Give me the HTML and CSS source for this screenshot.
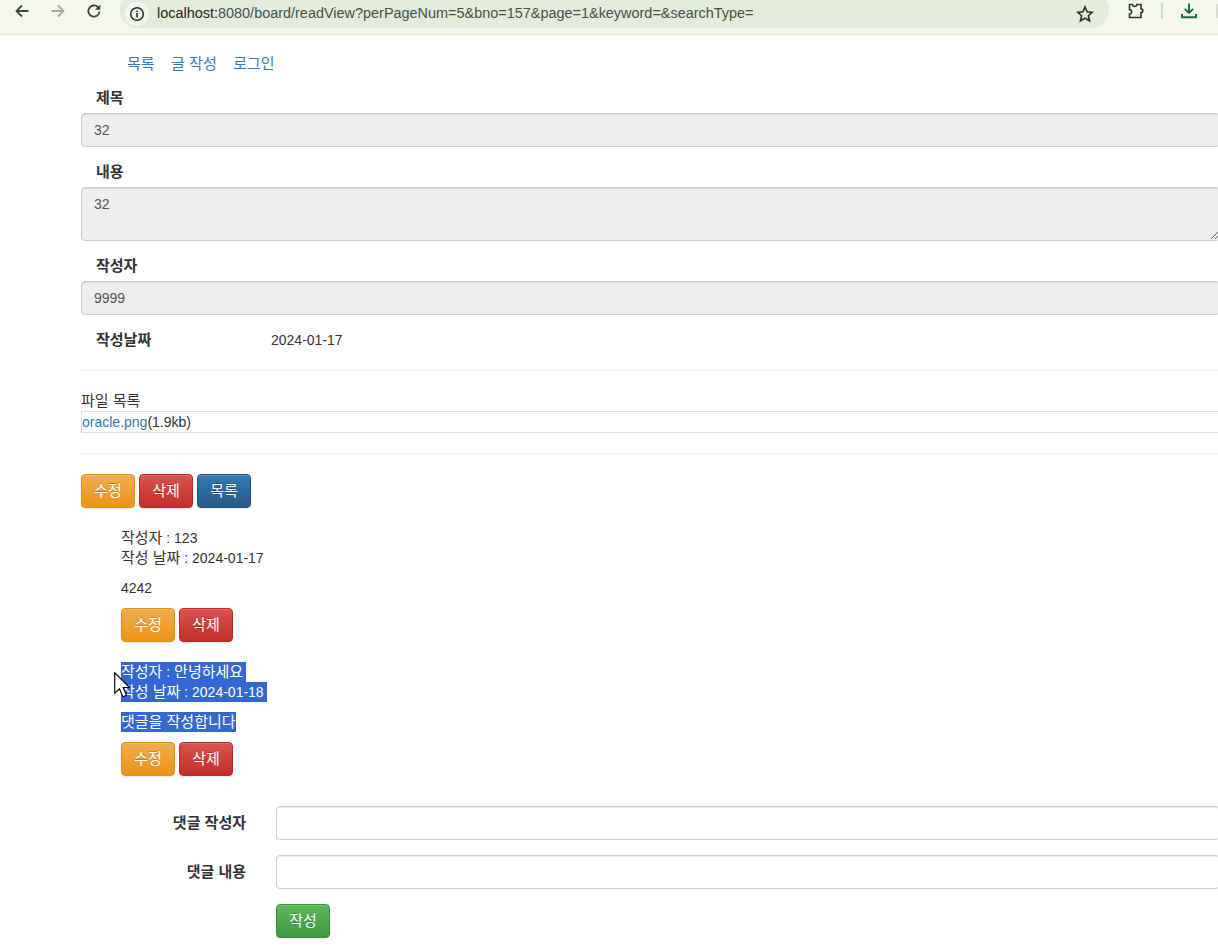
FILE: index.html
```html
<!DOCTYPE html>
<html lang="ko">
<head>
<meta charset="utf-8">
<title>게시글 보기</title>
<link rel="stylesheet" href="styles.css">
</head>
<body>
<header class="toolbar">
  <svg class="tool" viewBox="0 0 16 16"><path d="M14.500 8H2.500M8 2.500L2.500 8 8 13.500" fill="none" stroke="#3f4a3c" stroke-width="1.800"/></svg>
  <svg class="tool" viewBox="0 0 16 16"><path d="M1.500 8h12M8 2.500L13.500 8 8 13.500" fill="none" stroke="#a4aaa0" stroke-width="1.800"/></svg>
  <svg class="tool" viewBox="0 0 16 16"><path d="M13.500 8.500a5.600 5.600 0 1 1-1.700-4.500L13.500 5.800" fill="none" stroke="#3f4a3c" stroke-width="1.800"/><path d="M14.300 1.500v5.300H9z" fill="#3f4a3c"/></svg>
  <div class="omnibox">
    <span class="info"><svg viewBox="0 0 16 16" width="16" height="16"><circle cx="8" cy="8" r="6.300" fill="none" stroke="#262b24" stroke-width="1.500"/><path d="M8 7v4.400M8 4.400v1.600" stroke="#262b24" stroke-width="1.600"/></svg></span>
    <span class="url">localhost:<span class="url-dim">8080/board/readView?perPageNum=5&amp;bno=157&amp;page=1&amp;keyword=&amp;searchType=</span></span>
    <svg class="star" viewBox="0 0 16 16"><path d="M8 1.800l1.900 4.200 4.500.5-3.400 3 1 4.500L8 11.700 4 14l1-4.500-3.400-3 4.500-.5z" fill="none" stroke="#2f362c" stroke-width="1.500"/></svg>
  </div>
  <svg class="ext" viewBox="0 0 18 18"><path d="M2.500 2.500h3.200a2 2 0 0 0 4 0h4.300v4.400a1.800 1.800 0 0 1 0 3.600v5H2.500v-3.500a2.200 2.200 0 0 0 0-4.400z" fill="none" stroke="#333a30" stroke-width="1.600"/></svg>
  <span class="divider"></span>
  <svg class="dl" viewBox="0 0 18 18"><path d="M9 1.500v9M4.800 6.800L9 11l4.200-4.200M2 12v3.200h14V12" fill="none" stroke="#1c6b3a" stroke-width="1.900"/></svg>
  <span class="edge"></span>
</header>

<main class="page">
  <nav class="nav ko">
    <a href="#">목록</a>
    <a href="#">글 작성</a>
    <a href="#">로그인</a>
  </nav>

  <section class="post">
    <label class="label ko">제목</label>
    <input class="field" type="text" value="32" readonly>
    <label class="label ko">내용</label>
    <textarea class="field area" readonly>32</textarea>
    <label class="label ko">작성자</label>
    <input class="field" type="text" value="9999" readonly>
    <div class="date-row">
      <span class="date-label ko">작성날짜</span>
      <span>2024-01-17</span>
    </div>
  </section>

  <hr class="rule rule-top">
  <div class="files">
    <div class="files-title ko">파일 목록</div>
    <div class="files-box"><a href="#">oracle.png</a>(1.9kb)</div>
  </div>
  <hr class="rule rule-bottom">

  <div class="btns">
    <button class="btn warning ko">수정</button>
    <button class="btn danger ko">삭제</button>
    <button class="btn primary ko">목록</button>
  </div>

  <ul class="comments">
    <li class="comment">
      <p class="meta"><span class="ko">작성자</span> : 123<br><span class="ko">작성 날짜</span> : 2024-01-17</p>
      <p class="body-text">4242</p>
      <div class="btns"><button class="btn warning ko">수정</button><button class="btn danger ko">삭제</button></div>
    </li>
    <li class="comment">
      <p class="meta"><span class="sel"><span class="ko">작성자</span> : <span class="ko">안녕하세요</span></span><br><span class="sel"><span class="ko">작성 날짜</span> : 2024-01-18</span></p>
      <p class="body-text"><span class="sel sel-end ko">댓글을 작성합니다</span></p>
      <div class="btns"><button class="btn warning ko">수정</button><button class="btn danger ko">삭제</button></div>
      <svg class="cursor" viewBox="0 0 16 26" width="16" height="26"><path d="M.7.700v20.600l4.800-4.500 3.300 7.900 3.700-1.500-3.400-7.700h6.500z" fill="#fff" stroke="#111" stroke-width="1.200"/></svg>
    </li>
  </ul>

  <form class="reply">
    <div class="reply-row">
      <label class="reply-label ko">댓글 작성자</label>
      <input class="field reply-input" type="text">
    </div>
    <div class="reply-row">
      <label class="reply-label ko">댓글 내용</label>
      <input class="field reply-input" type="text">
    </div>
    <div class="reply-row">
      <span class="reply-label"></span>
      <button class="btn success ko" type="button">작성</button>
    </div>
  </form>
</main>
</body>
</html>
```
FILE: styles.css
```css
* { box-sizing: border-box; }
html, body { margin: 0; height: 952px; overflow: hidden; }
body {
  font-family: "Liberation Sans", "Noto Sans CJK KR", sans-serif;
  font-size: 14px;
  line-height: 20px;
  color: #333;
  background: #fff;
}
a { color: #337ab7; text-decoration: none; }
.ko { font-size: 15px; line-height: 20px; }

.toolbar {
  height: 35px;
  display: flex;
  align-items: flex-start;
  background: #f3f7ee;
  border-bottom: 1px solid #e2e4de;
  overflow: hidden;
}
.tool { width: 16px; height: 16px; margin-top: 3px; flex: none; }
.tool:nth-child(1) { margin-left: 14px; }
.tool:nth-child(2) { margin-left: 20px; }
.tool:nth-child(3) { margin-left: 20px; }
.omnibox {
  flex: none;
  width: 989px;
  height: 36px;
  margin: -8px 0 0 18px;
  padding: 0 14px 0 5px;
  display: flex;
  align-items: center;
  background: #e3ebda;
  border-radius: 18px;
}
.info {
  width: 24px; height: 24px;
  margin-top: 8px;
  border-radius: 50%;
  background: #f3f7ee;
  display: flex; align-items: center; justify-content: center;
  flex: none;
}
.url { margin: 6px 0 0 8px; font-size: 14.450px; color: #222820; white-space: nowrap; flex: 1; }
.url-dim { color: #4a5147; }
.star { width: 18px; height: 18px; margin: 8px 1px 0 0; flex: none; }
.ext { width: 18px; height: 18px; margin: 2px 0 0 18px; flex: none; }
.divider { width: 2px; height: 16px; margin: 3px 0 0 16px; background: #cfe0c4; flex: none; }
.dl { width: 18px; height: 18px; margin: 2px 0 0 17px; flex: none; }
.edge { width: 2px; height: 14px; margin: 4px 0 0 18px; background: #d9ddd3; flex: none; }

.page { width: 1139px; margin-left: 81px; }

.nav { height: 20px; margin: 19px 0 0 46px; display: flex; gap: 16.500px; }

.post { margin-top: 13px; }
.label { display: block; height: 20px; margin: 0 0 6px 15px; font-weight: 700; line-height: 22px; }
.field {
  display: block;
  width: 100%;
  height: 34px;
  margin: 0 0 14px;
  padding: 6px 12px;
  font: inherit;
  color: #555;
  background: #fff;
  border: 1px solid #ccc;
  border-radius: 4px;
  box-shadow: inset 0 1px 1px rgba(0,0,0,.075);
  outline: none;
}
.post .field { background: #eee; }
.area { height: 54px; resize: vertical; }

.date-row { display: flex; height: 20px; margin: 15px 0 0 15px; }
.date-label { width: 175px; font-weight: 700; }

.rule { border: 0; border-top: 1px solid #eee; margin: 0; }
.rule-top { margin-top: 20px; }
.files { margin-top: 19px; }
.files-title { height: 20px; line-height: 22px; }
.files-box {
  height: 22px;
  margin-top: 1px;
  line-height: 20px;
  border: 1px solid #ddd;
}
.rule-bottom { margin-top: 20px; }

.btns { display: flex; gap: 4px; margin-top: 20px; }
.btn {
  width: 54px;
  height: 34px;
  padding: 0;
  font-family: inherit;
  color: #fff;
  text-shadow: 0 -1px 0 rgba(0,0,0,.2);
  border: 1px solid;
  border-radius: 4px;
  box-shadow: inset 0 1px 0 rgba(255,255,255,.15), 0 1px 1px rgba(0,0,0,.075);
}
.warning { background: linear-gradient(#f0ad4e, #eb9316); border-color: #e38d13; }
.danger { background: linear-gradient(#d9534f, #c12e2a); border-color: #b92c28; }
.primary { background: linear-gradient(#337ab7, #265a88); border-color: #245580; }
.success { background: linear-gradient(#5cb85c, #419641); border-color: #3e8f3e; }

.comments { list-style: none; margin: 0; padding: 0 0 0 40px; }
.comment { position: relative; height: 115px; margin-top: 19px; padding-top: 1px; }
.comment .btns { margin-top: 0; }
.meta { margin: 0 0 10px; }
.body-text { margin: 0 0 10px; }
.sel {
  display: inline-block;
  height: 20px;
  padding-right: 3px;
  background: #3367d1;
  color: #fff;
  vertical-align: top;
}
.sel-end { padding-right: 0; }
.cursor { position: absolute; left: -7px; top: 11px; }

.reply { margin-top: 30px; }
.reply-row { display: flex; align-items: flex-start; margin-bottom: 15px; }
.reply-label { width: 165px; margin-right: 30px; padding-top: 7px; font-weight: 700; text-align: right; }
.reply-input { flex: 1; margin: 0; }
```
